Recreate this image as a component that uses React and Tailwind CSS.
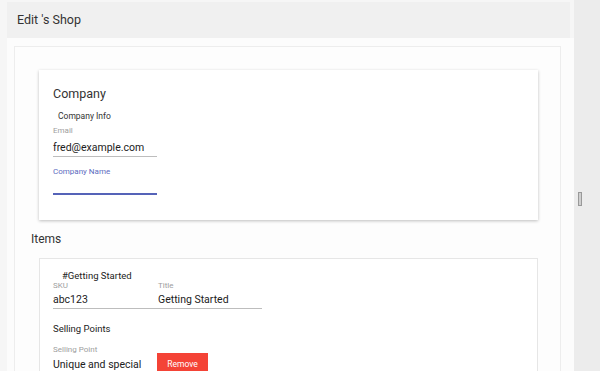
import React from 'react';

const Label = ({ children, focused }) => (
  <span className={`block text-[8px] leading-[10px] ${focused ? 'text-[#5c6bc0]' : 'text-[#9e9e9e]'}`}>{children}</span>
);

const Value = ({ children, className = '' }) => (
  <span className={`block h-[12px] text-[10.5px] leading-[12px] text-[#212121] ${className}`}>{children}</span>
);

const App = () => {
  return (
    <div
      className="flex h-[371px] w-[600px] overflow-hidden bg-[#f6f6f6] text-[#333]"
      style={{ fontFamily: 'Roboto, "Liberation Sans", Arial, sans-serif' }}
    >
      <div className="w-[574px] shrink-0 pl-[7px] pt-[2px]">
        {/* Header */}
        <div className="flex h-[36px] w-[563px] items-center bg-[#f0f0f0] pl-[10px]">
          <h1 className="text-[12.5px] text-[#333]">Edit 's Shop</h1>
        </div>

        <div className="w-[567px] bg-[#fcfcfc] pl-[7px] pt-[8px]">
          <div className="h-[340px] w-[547px] border-l border-t border-r border-[#ededed] bg-[#fdfdfd] pt-[23px]">
            {/* Company card */}
            <div className="ml-[24px] w-[499px] bg-white pl-[14px] pt-[17px] pb-[25px] shadow-[0_1px_3px_rgba(0,0,0,0.25)]">
              <h2 className="text-[12.5px] leading-[14px] text-[#333]">Company</h2>
              <p className="mt-[9px] pl-[5px] text-[8.5px] leading-[12px] text-[#333]">Company Info</p>

              <div className="mt-[4px] w-[104px]">
                <Label>Email</Label>
                <Value className="mt-[6px]">fred@example.com</Value>
                <div className="mt-[2px] h-px bg-[#bdbdbd]" />
              </div>

              <div className="mt-[10px] w-[104px]">
                <Label focused>Company Name</Label>
                <div className="mt-[16px] h-[2px] bg-[#5563b8]" />
              </div>
            </div>

            {/* Items */}
            <h2 className="mt-[12px] ml-[16px] text-[12px] leading-[14px] text-[#333]">Items</h2>

            <div className="ml-[24px] mt-[12px] h-[200px] w-[499px] border-l border-r border-t border-[#e6e6e6] bg-white pl-[13px] pt-[11px]">
              <p className="pl-[9px] text-[9.5px] leading-[12px] text-[#222]">#Getting Started</p>

              <div className="-mt-px w-[209px]">
                <div className="flex">
                  <div className="w-[105px]">
                    <Label>SKU</Label>
                    <Value className="mt-[3px]">abc123</Value>
                  </div>
                  <div>
                    <Label>Title</Label>
                    <Value className="mt-[3px]">Getting Started</Value>
                  </div>
                </div>
                <div className="mt-[2px] h-px bg-[#bdbdbd]" />
              </div>

              <p className="mt-[14px] text-[9.5px] leading-[12px] text-[#222]">Selling Points</p>

              <div className="mt-[10px] flex items-start">
                <div className="w-[104px]">
                  <Label>Selling Point</Label>
                  <Value className="mt-[4px]">Unique and special</Value>
                  <div className="mt-[2px] h-px bg-[#bdbdbd]" />
                </div>
                <button className="mt-[8px] flex h-[22px] w-[51px] items-center justify-center bg-[#f44336] text-[8.5px] text-white">
                  Remove
                </button>
              </div>
            </div>
          </div>
        </div>
      </div>

      {/* Scroll gutter */}
      <div className="relative flex-1 bg-[#ececec]">
        <div className="absolute left-[4px] top-[192px] h-[14px] w-[4px] border border-[#999] bg-[#cfcfcf]" />
      </div>
    </div>
  );
};

export default App;
